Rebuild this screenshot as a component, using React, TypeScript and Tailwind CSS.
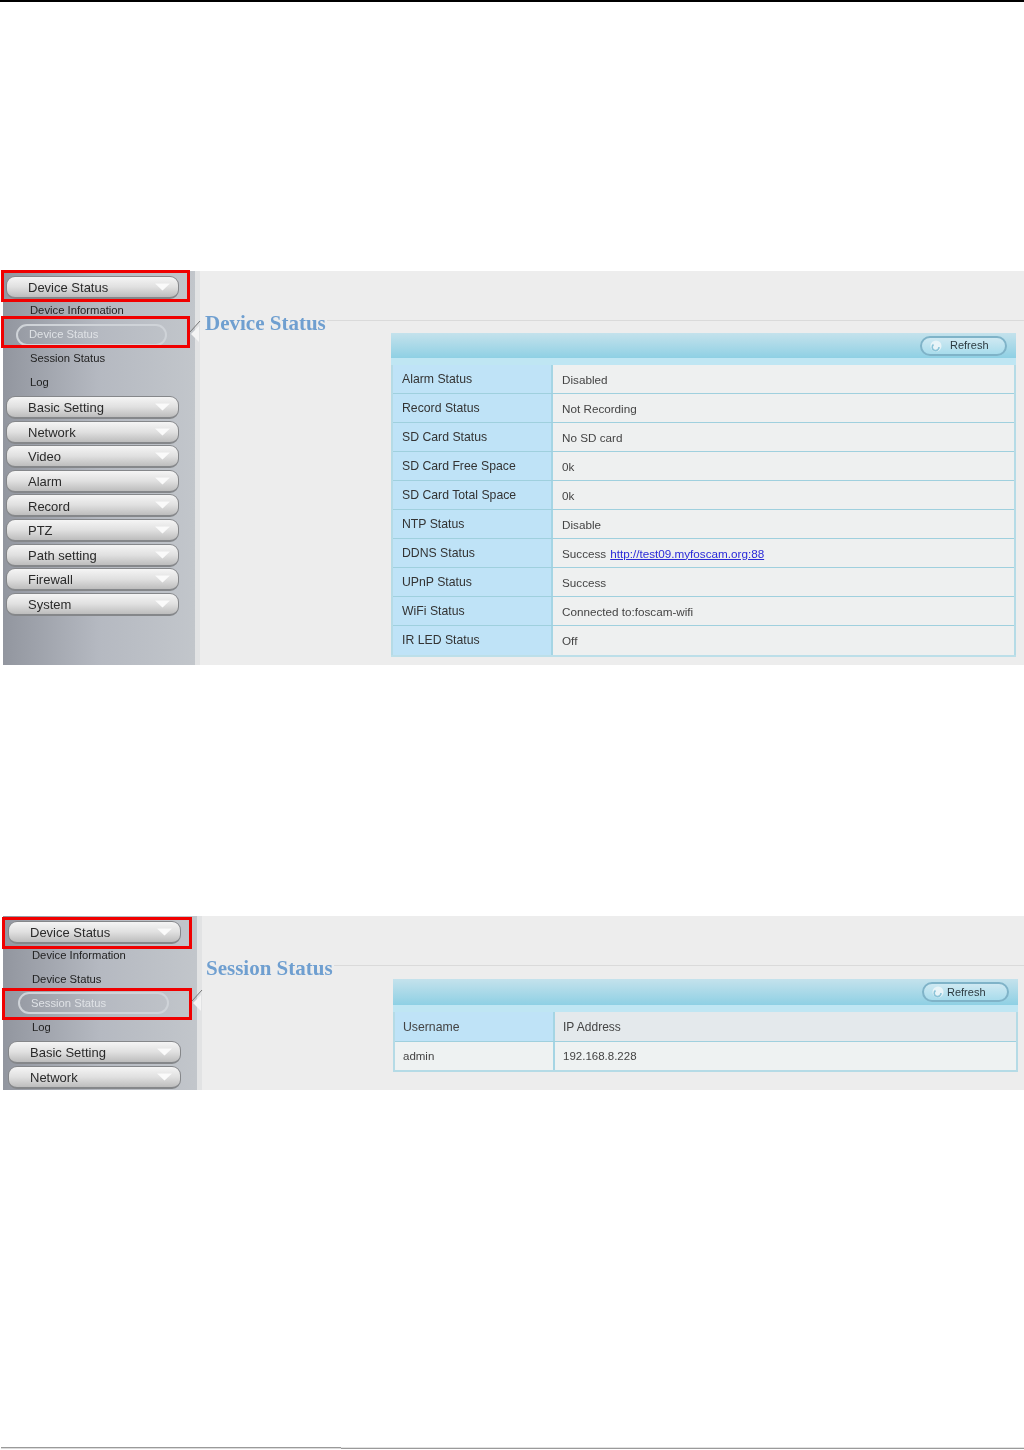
const menuBelow = ["Basic Setting", "Network", "Video", "Alarm", "Record", "PTZ", "Path setting", "Firewall", "System"];
const subItems = ["Device Information", "Device Status", "Session Status", "Log"];

const statusRows: [string, string][] = [
  ["Alarm Status", "Disabled"],
  ["Record Status", "Not Recording"],
  ["SD Card Status", "No SD card"],
  ["SD Card Free Space", "0k"],
  ["SD Card Total Space", "0k"],
  ["NTP Status", "Disable"],
  ["DDNS Status", "Success"],
  ["UPnP Status", "Success"],
  ["WiFi Status", "Connected to:foscam-wifi"],
  ["IR LED Status", "Off"],
];

function MenuButton({ label }: { label: string }) {
  return (
    <div className="flex h-[23px] w-[173px] shrink-0 items-center justify-between rounded-[9px] border border-b-2 border-[#85878a] bg-linear-to-b from-[#f5f5f5] via-[#e0e0e0] to-[#bdbdbd] pl-[21px] pr-[8px] text-[13px] text-[#2a2a2a]">
      <span className="pt-[2px]">{label}</span>
      <svg width="15" height="8" viewBox="0 0 15 8">
        <path d="M0 0.5 H15 L7.5 7.5 Z" fill="#fafafa" />
      </svg>
    </div>
  );
}

function SubItem({ label, active }: { label: string; active: boolean }) {
  if (active) {
    return (
      <div className="relative flex h-[23.75px] shrink-0 items-center">
        <div className="ml-[10px] flex h-[22px] w-[151px] items-center rounded-[11px] border-2 border-[#cfd3d8] pl-[11px] text-[11.25px] text-[#dfe2e6]">
          {label}
        </div>
        <svg className="absolute left-[181px] top-[-2px]" width="14" height="24" viewBox="0 0 14 24">
          <path d="M13 0 L3 11" stroke="#777" strokeWidth="1" fill="none" />
          <path d="M12 5 L4 13 L12 21 Z" fill="#f4f4f4" />
        </svg>
      </div>
    );
  }
  return (
    <div className="flex h-[23.75px] shrink-0 items-center pl-[24px] text-[11.25px] text-[#222]">{label}</div>
  );
}

function Sidebar({ active, wide, items }: { active: string; wide: boolean; items: string[] }) {
  return (
    <div
      className={`flex shrink-0 flex-col bg-linear-to-r from-[#92969f] via-[#b5b9c1] to-[#c2c6cb] pt-[5px] ${
        wide ? "w-[194px] pl-[5px]" : "w-[192px] pl-[3px]"
      }`}
    >
      <MenuButton label="Device Status" />
      <div className="mb-[2px] flex flex-col">
        {subItems.map((s) => (
          <SubItem key={s} label={s} active={s === active} />
        ))}
      </div>
      <div className="flex flex-col gap-[1.6px]">
        {items.map((m) => (
          <MenuButton key={m} label={m} />
        ))}
      </div>
    </div>
  );
}

function PanelHeader({ tight }: { tight: boolean }) {
  return (
    <>
      <div
        className={`flex items-center justify-end bg-linear-to-b from-[#c4e2ec] to-[#8ed0e4] pr-[9px] ${
          tight ? "h-[26px]" : "h-[25px]"
        }`}
      >
        <div className="flex h-[20px] w-[87px] items-center rounded-[10px] border-2 border-[#7fb3c8] bg-linear-to-b from-[#cfe9f2] to-[#a8dcec] pl-[7px] text-[11px] text-[#2c3a40]">
          <svg width="14" height="14" viewBox="0 0 14 14">
            <circle cx="7" cy="7" r="5.5" fill="#e8f4f8" />
            <path d="M4.5 5.5 A3.4 3.4 0 1 0 10 8" stroke="#8cc4d8" strokeWidth="1.6" fill="none" />
          </svg>
          <span className={tight ? "ml-[2px]" : "ml-[7px]"}>Refresh</span>
        </div>
      </div>
      <div className="h-[7px] bg-[#bfe6f3]" />
    </>
  );
}

function Title({ text, className }: { text: string; className: string }) {
  return (
    <div className="mt-[42px] flex h-[20px] items-center">
      <span className={`translate-y-px font-['Liberation_Serif',serif] text-[21px] font-bold text-[#6f9fd0] ${className}`}>
        {text}
      </span>
      <div className="ml-[1px] h-px flex-1 -translate-y-[3px] bg-[#dadada]" />
    </div>
  );
}

function Cell({ label, children }: { label: string; children: React.ReactNode }) {
  return (
    <div className="flex h-[29px] border-b border-[#9fd0de] last:border-b-0">
      <div className="flex w-[160px] shrink-0 items-center border-r-2 border-[#a5d5e4] bg-[#bfe3f7] pl-[9px] text-[12.25px] text-[#333]">
        {label}
      </div>
      <div className="flex flex-1 items-center bg-[#eef0f0] pl-[9px] pt-px text-[11.7px] text-[#444]">{children}</div>
    </div>
  );
}

function RedBox({ className }: { className: string }) {
  return <div className={`absolute h-[32px] border-[3px] border-[#f00000] ${className}`} />;
}

export default function App() {
  return (
    <div className="flex h-[1450px] w-[1024px] flex-col overflow-hidden bg-white font-['Liberation_Sans',Arial,sans-serif]">
      <div className="h-[2px] bg-black" />

      {/* device status shot */}
      <div className="relative ml-[3px] mt-[269px] h-[394px]">
        <div className="flex h-full overflow-hidden blur-[0.6px]">
          <Sidebar active="Device Status" wide={false} items={menuBelow} />
          <div className="w-[5px] shrink-0 bg-[#e2e3e4]" />
          <div className="min-w-0 flex-1 bg-[#ededed]">
            <Title text="Device Status" className="ml-[5px]" />
            <div className="ml-[191px] w-[625px] border-b-2 border-[#bcdfe9]">
              <PanelHeader tight={false} />
              <div className="flex flex-col border-x-2 border-[#b5dbe6]">
                {statusRows.map(([k, v]) => (
                  <Cell key={k} label={k}>
                    {v}
                    {k === "DDNS Status" && (
                      <a className="ml-[4px] text-[#2a2ad8] underline">http://test09.myfoscam.org:88</a>
                    )}
                  </Cell>
                ))}
              </div>
            </div>
          </div>
        </div>
        <RedBox className="left-[-2px] top-[-1px] w-[189px]" />
        <RedBox className="left-[-2px] top-[45px] w-[189px]" />
      </div>

      {/* session status shot */}
      <div className="relative ml-[3px] mt-[251px] h-[174px]">
        <div className="flex h-full overflow-hidden blur-[0.6px]">
          <Sidebar active="Session Status" wide items={menuBelow.slice(0, 2)} />
          <div className="w-[5px] shrink-0 bg-[#e2e3e4]" />
          <div className="min-w-0 flex-1 bg-[#ededed]">
            <Title text="Session Status" className="ml-[4px]" />
            <div className="ml-[191px] mt-[1px] w-[625px]">
              <PanelHeader tight />
              <div className="flex flex-col border-x-2 border-b-2 border-[#b5dbe6]">
                <div className="flex h-[30px] border-b border-[#9fd0de]">
                  <div className="flex w-[160px] shrink-0 items-center border-r-2 border-[#a5d5e4] bg-[#bfe3f7] pl-[8px] pt-px text-[12.25px] text-[#444]">
                    Username
                  </div>
                  <div className="flex flex-1 items-center bg-[#e4e9ec] pl-[8px] text-[12px] text-[#444]">IP Address</div>
                </div>
                <div className="flex h-[28px]">
                  <div className="flex w-[160px] shrink-0 items-center border-r-2 border-[#a5d5e4] bg-[#eef2f2] pl-[8px] pt-px text-[11.5px] text-[#444]">
                    admin
                  </div>
                  <div className="flex flex-1 items-center bg-[#eef2f2] pl-[8px] pt-px text-[11.5px] text-[#444]">192.168.8.228</div>
                </div>
              </div>
            </div>
          </div>
        </div>
        <RedBox className="left-[-1px] top-[1px] w-[190px]" />
        <RedBox className="left-[-1px] top-[72px] w-[190px]" />
      </div>

      {/* footer rule */}
      <div className="mb-px ml-px mt-auto flex h-[2px]">
        <div className="h-full w-[340px] border-b border-[#dcdcdc] bg-[#9a9a9a]" />
        <div className="h-full flex-1 border-t border-[#e2e2e2] bg-[#9a9a9a]" />
      </div>
    </div>
  );
}
